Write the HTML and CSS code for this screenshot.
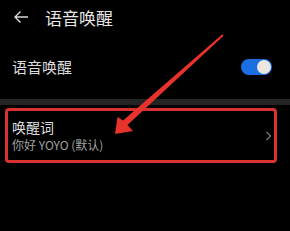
FILE: index.html
```html
<!DOCTYPE html>
<html lang="zh-CN">
<head>
    <meta charset="UTF-8">
    <meta name="viewport" content="width=device-width, initial-scale=1.0">
    <title>语音唤醒</title>
    <link rel="stylesheet" href="styles.css">
</head>
<body>
    <header class="top-bar">
        <svg class="back" width="16" height="14" viewBox="0 0 16 14">
            <path d="M15 7H2M7.5 1.5L2 7l5.5 5.5" fill="none" stroke="#d8d8d8" stroke-width="1.4"/>
        </svg>
        <h1>语音唤醒</h1>
    </header>
    <main>
        <div class="setting-row">
            <span class="label">语音唤醒</span>
            <span class="toggle"><span class="knob"></span></span>
        </div>
        <div class="divider"></div>
        <div class="wake-word">
            <div class="texts">
                <div class="title">唤醒词</div>
                <div class="sub">你好 YOYO (默认)</div>
            </div>
            <svg class="chevron" width="7" height="10" viewBox="0 0 7 10">
                <path d="M1.5 1l4 4-4 4" fill="none" stroke="#777" stroke-width="1.3"/>
            </svg>
        </div>
    </main>
    <!-- annotation arrow drawn over the screenshot -->
    <svg class="pointer" width="290" height="231" viewBox="0 0 290 231">
        <polygon points="222.4,34.3 223.6,35.7 127.5,125 133,131 115,134 117.5,117 123,120.5" fill="#e8322c"/>
    </svg>
</body>
</html>
```

FILE: styles.css
```css
body {
    margin: 0;
    background: #000;
    color: #e2e2e2;
    font-family: "Noto Sans CJK SC", "Noto Sans", sans-serif;
    width: 290px;
    height: 231px;
    overflow: hidden;
    position: relative;
}

.top-bar {
    display: flex;
    align-items: center;
    height: 34px;
    padding-left: 13px;
}

.top-bar h1 {
    margin: 0 0 0 16px;
    font-size: 17px;
    font-weight: normal;
    color: #e6e6e6;
}

.setting-row {
    display: flex;
    align-items: center;
    justify-content: space-between;
    height: 65px;
    padding: 0 18px 0 12px;
}

.label {
    font-size: 15px;
    color: #dcdcdc;
}

.toggle {
    width: 30px;
    height: 16px;
    border-radius: 8px;
    background: #1b6fe3;
    display: flex;
    align-items: center;
    justify-content: flex-end;
    padding-right: 1px;
}

.knob {
    width: 14px;
    height: 14px;
    border-radius: 50%;
    background: #ebe7de;
}

.divider {
    height: 6px;
    background: #242424;
}

.wake-word {
    margin: 3px 13px 0 5px;
    height: 49px;
    border: 3px solid #d8332f;
    border-radius: 4px;
    display: flex;
    align-items: center;
    justify-content: space-between;
    padding: 0 2px 0 4px;
}

.title {
    font-size: 14px;
    color: #dedede;
    line-height: 17px;
}

.sub {
    font-size: 12px;
    color: #a0a0a0;
    line-height: 17px;
}

.pointer {
    position: absolute;
    left: 0;
    top: 0;
}
```
